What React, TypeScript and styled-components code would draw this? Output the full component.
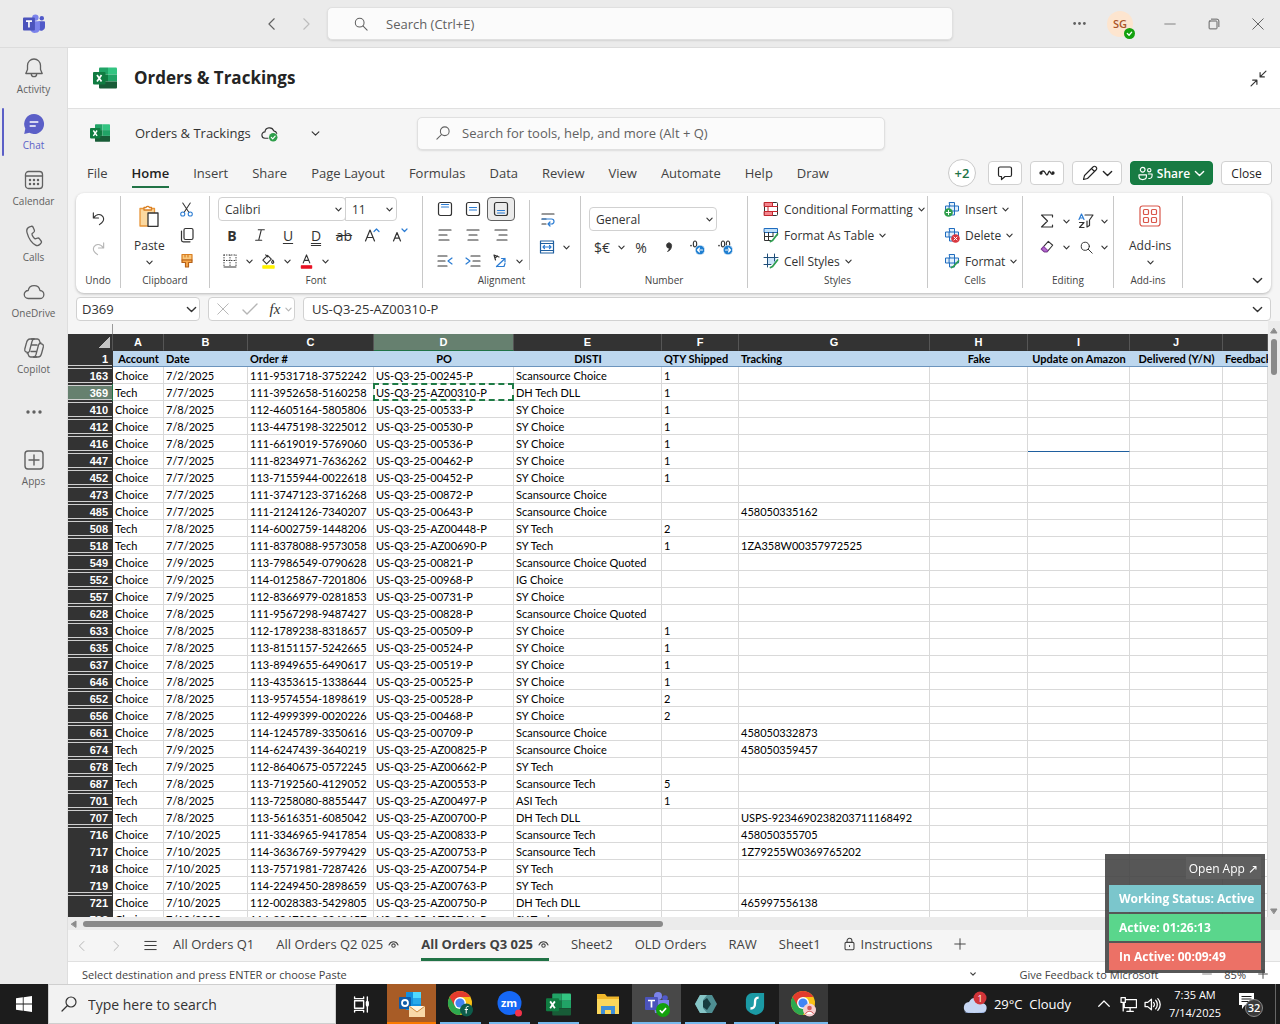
import React from 'react';
import styled, { createGlobalStyle, css } from 'styled-components';

const UI = `"Open Sans", "Noto Sans", sans-serif`;
const SHEET = `Lato, "Open Sans", sans-serif`;

const GlobalStyle = createGlobalStyle`
  *, *::before, *::after { box-sizing: border-box; }
  body { margin: 0; font-family: ${UI}; font-size: 13px; color: #333; background: #ebebeb; }
  button, input, select { font: inherit; color: inherit; margin: 0; padding: 0; border: 0; background: none; outline: 0; }
  svg { display: block; flex: none; }
`;

/* ---------- icons ---------- */

type IconProps = { w?: number; h?: number; box?: string; sw?: number; children: React.ReactNode };
const Icon = ({ w = 16, h = w, box = '0 0 16 16', sw = 1, children }: IconProps) => (
  <svg width={w} height={h} viewBox={box} fill="none" stroke="currentColor" strokeWidth={sw} strokeLinecap="round" strokeLinejoin="round" aria-hidden="true">
    {children}
  </svg>
);

const Chevron = ({ w = 7, sw = 1.3 }: { w?: number; sw?: number }) => (
  <Icon w={w} h={w} box="0 0 8 8" sw={sw}><path d="M1 2.5 4 5.5 7 2.5" /></Icon>
);
const Left = ({ w = 14 }: { w?: number }) => <Icon w={w} sw={1.3}><path d="M10.5 2 4.5 8l6 6" /></Icon>;
const Right = ({ w = 14 }: { w?: number }) => <Icon w={w} sw={1.3}><path d="M5.5 2l6 6-6 6" /></Icon>;
const SearchIcon = ({ w = 14, flip = false }: { w?: number; flip?: boolean }) => (
  <Icon w={w} sw={1.2}>
    {flip ? <><circle cx="10" cy="6" r="5" /><path d="M6.5 9.5 1 15" /></> : <><circle cx="6.5" cy="6.5" r="5" /><path d="M10.2 10.2 15 15" /></>}
  </Icon>
);

const ExcelLogo = ({ w = 24 }: { w?: number }) => (
  <svg width={w} height={w} viewBox="0 0 24 24" aria-hidden="true">
    <path d="M7 1.500h8v7H6v-6a1 1 0 0 1 1-1z" fill="#21a366" />
    <path d="M15 1.500h8a1 1 0 0 1 1 1v6h-9z" fill="#33c481" />
    <path d="M6 8.500h9v7H6z" fill="#107c41" />
    <path d="M15 8.500h9v7h-9z" fill="#21a366" />
    <path d="M6 15.500h18v6a1 1 0 0 1-1 1H7a1 1 0 0 1-1-1z" fill="#185c37" />
    <rect x="0" y="6" width="12.500" height="12.500" rx="1" fill="#107c41" />
    <path d="M4 9l4.500 6.500M8.500 9 4 15.500" stroke="#fff" strokeWidth="1.700" />
  </svg>
);

const TeamsLogo = ({ w = 22 }: { w?: number }) => (
  <svg width={w} height={w} viewBox="0 0 24 24" aria-hidden="true">
    <circle cx="13.500" cy="5" r="3.500" fill="#7b83eb" />
    <circle cx="20.500" cy="5.800" r="2.400" fill="#5059c9" />
    <path d="M17 9h6a1 1 0 0 1 1 1v5.500a4 4 0 0 1-7 2.500z" fill="#5059c9" />
    <path d="M8 9h10.500v7.500a5.500 5.500 0 0 1-10.500 2z" fill="#7b83eb" />
    <rect x="0" y="5" width="13" height="14" rx="1" fill="#4b53bc" />
    <path d="M3.300 8.800h6.500M6.500 8.800v7" stroke="#fff" strokeWidth="1.800" />
  </svg>
);

const BellIcon = () => <Icon w={22} box="0 0 22 22" sw={1.3}><path d="M11 2a6.500 6.500 0 0 0-6.500 6.500v4L2.800 16.500h16.400l-1.700-4v-4A6.500 6.500 0 0 0 11 2zM8.300 17a2.700 2.700 0 0 0 5.400 0" /></Icon>;
const ChatIcon = () => (
  <Icon w={22} box="0 0 22 22" sw={1.5}>
    <path d="M11 1a10 10 0 1 1-4.700 18.800L1.200 21l1.100-5.300A10 10 0 0 1 11 1z" fill="#5b5fc7" stroke="none" />
    <path d="M7.200 9h7.600M7.200 13h5" stroke="#fff" />
  </Icon>
);
const CalendarIcon = () => (
  <Icon w={22} box="0 0 22 22" sw={1.3}>
    <rect x="2.500" y="2.500" width="17" height="17" rx="3" /><path d="M2.500 7h17" />
    {[7, 11, 15].map((x) => [11, 15].map((y) => <circle key={`${x}${y}`} cx={x} cy={y} r="0.600" fill="currentColor" />))}
  </Icon>
);
const PhoneIcon = () => <Icon w={22} box="0 0 22 22" sw={1.3}><path d="M6.600 1.800 8 1.400c.9-.3 1.800.2 2.200 1l1.100 2.500c.3.800.1 1.600-.5 2.200L9 8.800c-.1 1.500 1.700 4.300 3.100 5l2.300-.7c.8-.3 1.600 0 2.100.7l1.600 2.200c.5.700.4 1.700-.2 2.300l-.9.900c-1.200 1.200-3 1.700-4.400.9C8.500 17.700 5.600 13.300 4.100 7.800 3.400 5.300 3.900 2.700 6.600 1.800z" /></Icon>;
const CloudIcon = () => <Icon w={22} box="0 0 22 22" sw={1.3}><path d="M5.300 17.500h11.400a4 4 0 0 0 .3-8A6 6 0 0 0 5.200 9.500a4 4 0 0 0 .1 8z" /></Icon>;
const CopilotIcon = () => (
  <Icon w={22} box="0 0 22 22" sw={1.300}>
    <path d="M8.500 2h6c1.500 0 1.900 1 2.300 2.500L17.300 6c.5 1 1.200 1 2 1.200 1 .4 1.300 1.500 1 2.800l-1.600 6c-.6 2.500-1.600 4-3.700 4h-4.500" />
    <path d="M13.500 20h-6C6 20 5.600 19 5.200 17.500L4.800 16c-.4-1-1.200-1-2-1.200-1-.4-1.300-1.500-1-2.800l1.600-6C4 3.500 5 2 7 2h4" />
    <path d="M11 2c-1 0-1.500 1-2 2.500L6.500 14c-.5 1.500-1 2-2.500 2M11 20c1 0 1.500-1 2-2.500L15.500 8c.5-1.500 1-2 2.500-2M8.300 8H14M8 14.500h5.500" />
  </Icon>
);
const AppsIcon = () => <Icon w={22} box="0 0 22 22" sw={1.400}><rect x="2" y="2" width="18" height="18" rx="3" /><path d="M11 6v10M6 11h10" /></Icon>;
const DotsIcon = ({ w = 16 }: { w?: number }) => (
  <svg width={w} height={w} viewBox="0 0 16 16" fill="currentColor" aria-hidden="true"><circle cx="2" cy="8" r="1.700" /><circle cx="8" cy="8" r="1.700" /><circle cx="14" cy="8" r="1.700" /></svg>
);
const EyeIcon = () => <Icon w={11} h={9} box="0 0 12 10" sw={1.200}><path d="M1 5.500C2 3 4 2 6 2s4 1 5 3.500" /><circle cx="6" cy="6.200" r="1.900" /></Icon>;

const AlignLines = ({ at }: { at: 'l' | 'c' | 'r' }) => (
  <Icon sw={1.200}>
    <path d={at === 'l' ? 'M2 3h12M2 8h8M2 13h10' : at === 'c' ? 'M2 3h12M4 8h8M3 13h10' : 'M2 3h12M6 8h8M4 13h10'} />
  </Icon>
);
const VAlign = ({ y }: { y: number }) => (
  <Icon w={16} sw={1.200}><rect x="1.500" y="1.500" width="13" height="13" rx="2" /><path d={`M4.500 ${y}h7M4.500 ${y + 2.500}h7`} stroke="#2b7cd3" /></Icon>
);
const Indent = ({ out = false }: { out?: boolean }) => (
  <Icon sw={1.200}>
    <path d={out ? 'M1 3h9M1 8h7M1 13h9' : 'M6 3h9M8 8h7M6 13h9'} />
    <path d={out ? 'M15 5l-4 3 4 3' : 'M1 5l4 3-4 3'} stroke="#2b7cd3" />
  </Icon>
);
const TableGrid = ({ kind }: { kind: 'cond' | 'table' | 'style' }) => (
  <Icon>
    {kind === 'cond' && <><rect x="1.500" y="1.500" width="13" height="13" rx="1" stroke="#333" /><path d="M1.500 1.500h8v4h-8zM1.500 10.500h8v4h-8z" fill="#f4868e" stroke="#c4262e" /><path d="M1.500 5.500h13M1.500 10.500h13M5 5.500v5" stroke="#c4262e" /></>}
    {kind === 'table' && <><rect x="1.500" y="1.500" width="13" height="4" fill="#bfe0fa" stroke="#1f6cbf" /><path d="M1.500 5.500v8h6M1.500 9.500H10M5.500 5.500v8M10 5.500V9M14.500 5.500V8" /><path d="M14.500 7 9.500 13.500 7.500 14.500" stroke="#2f9e50" strokeWidth="1.800" /></>}
    {kind === 'style' && <><path d="M4 5h9v6H4z" fill="#cfe6fa" stroke="none" /><path d="M4.500 1v13M11.500 1v7M1 4.500h14M1 11.500h7" stroke="#1f4e79" /><path d="M14.500 7 9.500 13.500 7.500 14.500" stroke="#2f9e50" strokeWidth="1.800" /></>}
  </Icon>
);
const CellCross = ({ kind }: { kind: 'insert' | 'delete' | 'format' }) => (
  <Icon>
    <path d="M5.500 1.500h5v3.500h4v5h-4v4h-5v-4h-4V5h4z" fill="#e3f0fb" stroke="#1f6cbf" />
    <path d="M5.500 5h5v5h-5z" stroke="#1f6cbf" />
    {kind === 'insert' && <><circle cx="4.500" cy="11.500" r="4.300" fill="#2e9e4a" stroke="none" /><path d="M4.500 9.300v4.400M2.300 11.500h4.400" stroke="#fff" /></>}
    {kind === 'delete' && <><circle cx="11.500" cy="11.500" r="4.300" fill="#d9363e" stroke="none" /><path d="M10 10l3 3M13 10l-3 3" stroke="#fff" /></>}
    {kind === 'format' && <path d="M14.500 8 9.500 13.500 7.500 14.500" stroke="#2f9e50" strokeWidth="1.800" />}
  </Icon>
);
const Decimal = ({ more = false }: { more?: boolean }) => (
  <Icon w={18} box="0 0 18 18" sw={1.100}>
    <path d="M3 7.500v.2" strokeWidth="1.600" /><ellipse cx="7" cy="6" rx="1.700" ry="3" />{more && <ellipse cx="12" cy="6" rx="1.700" ry="3" />}
    <circle cx="12" cy="12" r="4.800" fill="#1f7fd1" stroke="#fff" strokeWidth="0.600" />
    <path d={more ? 'M9.500 12h5M12.500 10l2 2-2 2' : 'M14.500 12h-5M11.500 10l-2 2 2 2'} stroke="#fff" />
  </Icon>
);

/* ---------- shell ---------- */

const Desktop = styled.div`display: flex; flex-direction: column; height: 100vh; overflow: hidden;`;
const IconButton = styled.button<{ $w?: number; $muted?: boolean }>`
  display: inline-flex; align-items: center; justify-content: center;
  width: ${(p) => p.$w ?? 28}px; height: 24px; flex: none;
  color: ${(p) => (p.$muted ? '#b5b5b5' : '#333')};
`;
const BarButton = styled(IconButton)`color: ${(p) => (p.$muted ? '#bdbdbd' : '#616161')};`;

const TitleBar = styled.header`
  display: grid; grid-template-columns: 1fr minmax(0, 626px) 1fr; align-items: center;
  height: 48px; flex: none; background: #ebebeb; border-bottom: 1px solid #dcdcdc;
`;
const BarSide = styled.div<{ $end?: boolean }>`
  display: flex; align-items: center; padding: ${(p) => (p.$end ? '0' : '0 5px 0 23px')};
  justify-content: ${(p) => (p.$end ? 'flex-end' : 'flex-start')};
`;
const Spacer = styled.div`flex: 1;`;
const SearchBox = styled.label<{ $gap: number; $pad: number }>`
  display: flex; align-items: center; gap: ${(p) => p.$gap}px; padding: 0 ${(p) => p.$pad}px;
  height: 33px; flex: 1; background: #fbfbfb; border: 1px solid #e0e0e0; border-radius: 5px;
  box-shadow: 0 1px 2px rgba(0,0,0,.1); color: #616161;
  input { flex: 1; min-width: 0; }
  input::placeholder { color: #616161; opacity: 1; }
`;
const Avatar = styled.button`
  position: relative; width: 26px; height: 26px; border-radius: 50%; margin: 0 15px 0 14px;
  background: #fde5cf; color: #a8542a; font-size: 11px; font-weight: 600;
`;
const Presence = styled.span`
  position: absolute; right: -2px; bottom: -2px; display: flex; align-items: center; justify-content: center;
  width: 11px; height: 11px; border-radius: 50%; background: #13a10e; color: #fff;
`;

const Body = styled.div`display: flex; flex: 1; min-height: 0;`;
const Rail = styled.nav`display: flex; flex-direction: column; width: 68px; flex: none; background: #ebebeb; border-right: 1px solid #dedede;`;
const RailItem = styled.button<{ $active?: boolean }>`
  position: relative; display: flex; flex-direction: column; align-items: center; justify-content: center; gap: 3px;
  height: 56px; font-size: 10px; line-height: 14px; color: ${(p) => (p.$active ? '#5b5fc7' : '#616161')};
  ${(p) => p.$active && css`&::before { content: ''; position: absolute; left: 2px; top: 4px; bottom: 4px; width: 2px; border-radius: 1px; background: #5b5fc7; }`}
`;
const Main = styled.main`display: flex; flex-direction: column; flex: 1; min-width: 0; background: #f5f5f5;`;
const FileHeader = styled.div`
  display: flex; align-items: center; gap: 17px; height: 61px; flex: none; padding: 0 8px 0 25px;
  background: #fff; border-bottom: 1px solid #e0e0e0;
  h1 { margin: 0; flex: 1; font-size: 17px; line-height: 24px; font-weight: 700; color: #242424; }
`;
const DocBar = styled.div`display: grid; grid-template-columns: 349px minmax(0, 468px) 1fr; align-items: center; height: 48px; flex: none;`;
const DocName = styled.div`display: flex; align-items: center; gap: 10px; padding-left: 22px; span { margin-left: 15px; }`;
const DocMenu = styled(IconButton)`margin-left: 14px;`;

const MenuBar = styled.div`display: flex; align-items: center; height: 32px; flex: none; padding: 0 8px 0 19px;`;
const MenuTabs = styled.nav`display: flex; flex: 1; gap: 24px;`;
const MenuTab = styled.button<{ $active?: boolean }>`
  height: 30px; border-bottom: 2px solid ${(p) => (p.$active ? '#217346' : 'transparent')};
  border-top: 2px solid transparent; font-weight: ${(p) => (p.$active ? 600 : 400)}; color: ${(p) => (p.$active ? '#222' : '#424242')};
`;
const Actions = styled.div`display: flex; align-items: center; gap: 8px;`;
const Peers = styled.button`width: 28px; height: 28px; margin-right: 4px; border: 1px solid #c9c9c9; border-radius: 50%; background: #fff; color: #217346; font-weight: 600;`;
const ActionButton = styled.button<{ $w: number; $primary?: boolean }>`
  display: inline-flex; align-items: center; justify-content: center; gap: 4px; width: ${(p) => p.$w}px; height: 24px;
  border: 1px solid ${(p) => (p.$primary ? '#107c41' : '#d1d1d1')}; border-radius: 4px; font-size: 12px;
  background: ${(p) => (p.$primary ? '#187b43' : '#fff')}; color: ${(p) => (p.$primary ? '#fff' : '#242424')}; font-weight: ${(p) => (p.$primary ? 600 : 400)};
`;

/* ---------- ribbon ---------- */

const Ribbon = styled.section`
  display: flex; height: 100px; flex: none; margin: 4px 9px 0 8px; padding: 3px 0 5px; background: #fff;
  border-radius: 8px; box-shadow: 0 1px 3px rgba(0,0,0,.25); font-size: 12px;
`;
const Group = styled.div<{ $w: number }>`
  display: flex; flex-direction: column; width: ${(p) => p.$w}px; flex: none; border-right: 1px solid #c8c8c8;
`;
const GroupBody = styled.div<{ $pad?: number; $gap?: number }>`
  display: flex; height: 78px; gap: ${(p) => p.$gap ?? 0}px; padding: 0 0 0 ${(p) => p.$pad ?? 0}px;
`;
const GroupLabel = styled.div`font-size: 10px; line-height: 12px; text-align: center; color: #424242;`;
const Stack = styled.div<{ $w?: number; $gap?: number; $center?: boolean; $foot?: number }>`
  display: flex; flex-direction: column; justify-content: center; gap: ${(p) => p.$gap ?? 2}px; padding-bottom: ${(p) => p.$foot ?? 0}px;
  align-items: ${(p) => (p.$center ? 'center' : 'flex-start')}; ${(p) => p.$w && `width: ${p.$w}px;`}
`;
const Row = styled.div<{ $gap?: number }>`display: flex; align-items: center; height: 24px; gap: ${(p) => p.$gap ?? 0}px;`;
const Toggle = styled(IconButton)<{ $on?: boolean }>`
  ${(p) => p.$on && 'border: 1px solid #616161; border-radius: 4px; background: #ebebeb;'}
`;
const Glyph = styled(IconButton)<{ $bold?: boolean; $italic?: boolean; $line?: string }>`
  font-size: 14px; font-weight: ${(p) => (p.$bold ? 700 : 400)};
  font-family: ${(p) => (p.$italic ? '"Liberation Serif", serif' : 'inherit')}; font-style: ${(p) => (p.$italic ? 'italic' : 'normal')};
  text-decoration: ${(p) => p.$line ?? 'none'}; text-underline-offset: 2px;
`;
const BigButton = styled.button`
  display: flex; flex-direction: column; align-items: center; justify-content: center; gap: 1px; line-height: 24px;
  > svg:first-child { margin-bottom: 6px; }
`;
const TextButton = styled.button`display: flex; align-items: center; gap: 5px; height: 24px; white-space: nowrap;`;
const SelectWrap = styled.span<{ $w: number; $joined?: boolean }>`
  display: grid; align-items: center; width: ${(p) => p.$w}px; height: 24px; background: #fff;
  border: 1px solid #d1d1d1; border-radius: ${(p) => (p.$joined ? '0 4px 4px 0' : '4px')};
  margin-left: ${(p) => (p.$joined ? '-1px' : '0')};
  > * { grid-area: 1 / 1; }
  > svg { justify-self: end; margin-right: 3px; pointer-events: none; }
  select { appearance: none; width: 100%; padding-left: 6px; }
`;
const Divider = styled.div`width: 1px; height: 70px; margin: 4px 4px 0; background: #c8c8c8;`;
const RibbonToggle = styled(IconButton)`margin: auto 0 0 auto; height: 16px;`;

/* ---------- formula bar ---------- */

const FormulaBar = styled.div`display: flex; gap: 8px; height: 24px; flex: none; margin: 4px 9px 0 8px;`;
const Field = styled.div<{ $w?: number }>`
  display: flex; align-items: center; ${(p) => (p.$w ? `width: ${p.$w}px;` : 'flex: 1;')} min-width: 0; padding: 0 2px 0 5px;
  background: #fff; border: 1px solid #d1d1d1; border-radius: 4px; color: #333;
  input { flex: 1; min-width: 0; }
`;
const FormulaField = styled(Field)`padding: 0 0 0 8px;`;
const Fx = styled(IconButton)`font: italic 15px "Liberation Serif", serif;`;

/* ---------- grid ---------- */

const SheetArea = styled.div`display: flex; flex: 1; min-height: 0;`;
const SheetPane = styled.div`flex: 1; min-width: 0; overflow: hidden;`;
const FreezeMark = styled.div`width: 45px; height: 10px; margin-top: 3px; border-right: 1px solid #9a9a9a;`;
const Grid = styled.table`
  width: 100%; table-layout: fixed; border-collapse: separate; border-spacing: 0; background: #fff;
  font-family: ${SHEET}; font-size: 11px; color: #000;
`;
const Letter = styled.th<{ $on?: boolean }>`
  height: 17px; padding: 0; font: 700 11px/16px "Liberation Sans", sans-serif; text-align: center; color: #fff;
  background: ${(p) => (p.$on ? '#66806f' : '#333')}; border-right: 1px solid #555; border-bottom: 1px solid ${(p) => (p.$on ? '#217346' : '#333')};
`;
const Corner = styled(Letter)`
  background: linear-gradient(135deg, transparent 50%, #c4c4c4 50%) right 2px center / 11px 11px no-repeat, #333;
`;
const RowHead = styled.th<{ $on?: boolean; $top?: boolean; $bottom?: boolean; $first?: boolean }>`
  height: ${(p) => (p.$first ? 16 : 17)}px; padding: ${(p) => (p.$first ? '1px 4px 0 0' : '2px 4px 0 0')};
  font: 700 11px/15px "Liberation Sans", sans-serif; text-align: right; color: #fff;
  background: ${(p) => (p.$on ? '#66806f' : '#333')}; border-right: 1px solid ${(p) => (p.$on ? '#217346' : '#333')};
  box-shadow: ${(p) => [p.$bottom && 'inset 0 -1px #333, inset 0 -2px #d0d0d0', p.$top && 'inset 0 1px #333, inset 0 2px #d0d0d0'].filter(Boolean).join(', ') || 'none'};
`;
const FieldHead = styled.th<{ $center?: boolean }>`
  height: 16px; padding: 1px 2px 0; line-height: 14px; white-space: nowrap; font-weight: 700; background: #bdd7ee; border-bottom: 1px solid #6b94bd;
  text-align: ${(p) => (p.$center ? 'center' : 'left')};
`;
const Cell = styled.td<{ $copied?: boolean; $marked?: boolean }>`
  position: relative; height: 17px; padding: 2px 0 0 2px; line-height: 14px; white-space: nowrap;
  border-right: 1px solid #d9d9d9; border-bottom: 1px solid ${(p) => (p.$marked ? '#1f5f9f' : '#d9d9d9')};
  ${(p) => p.$copied && css`&::after { content: ''; position: absolute; inset: -1px; border: 2px dashed #1e7b45; }`}
`;
const VScroll = styled.div`
  display: flex; flex-direction: column; align-items: center; gap: 4px; width: 12px; padding: 6px 0 2px; background: #ebebeb; color: #8a8a8a;
`;
const VThumb = styled.div`width: 6px; height: 36px; border-radius: 3px; background: #8a8a8a;`;
const HScroll = styled.div`display: flex; align-items: center; gap: 5px; height: 13px; flex: none; padding: 0 2px; background: #ebebeb; color: #8a8a8a;`;
const HThumb = styled.div`width: 48%; height: 6px; border-radius: 3px; background: #8a8a8a;`;

const SheetTabs = styled.div`display: flex; align-items: center; height: 32px; flex: none; border-bottom: 1px solid #e0e0e0; color: #424242;`;
const SheetNav = styled.div`display: flex; gap: 4px; margin-right: 9px;`;
const TabList = styled.div`display: flex; gap: 22px;`;
const SheetTab = styled.button<{ $active?: boolean }>`
  display: flex; align-items: center; gap: 5px; height: 31px; white-space: nowrap;
  border-bottom: 3px solid ${(p) => (p.$active ? '#217346' : 'transparent')}; font-weight: ${(p) => (p.$active ? 700 : 400)};
`;
const StatusBar = styled.footer`
  display: flex; align-items: center; height: 22px; flex: none; padding: 2px 12px 0 14px; background: #fff; font-size: 11px; color: #424242;
`;
const StatusRight = styled.div`display: flex; align-items: center; margin-left: auto; gap: 12px;`;
const Feedback = styled.a`margin: 0 32px; color: inherit; text-decoration: none;`;

/* ---------- tracker widget ---------- */

const Tracker = styled.aside`
  position: fixed; right: 15px; bottom: 51px; z-index: 2; display: flex; flex-direction: column; gap: 2px;
  width: 160px; padding: 3px 4px; background: rgba(64,64,64,.88); color: #fff;
`;
const OpenApp = styled.button`align-self: flex-end; height: 22px; margin-bottom: 4px; padding: 0 3px; background: #5f5f5f; color: #fff; font-size: 12px;`;
const TrackerRow = styled.div<{ $bg: string }>`height: 27px; padding: 0 10px; line-height: 27px; font-size: 12px; font-weight: 700; white-space: nowrap; background: ${(p) => p.$bg};`;

/* ---------- taskbar ---------- */

const Taskbar = styled.div`display: flex; height: 40px; flex: none; background: #1c1c1c; color: #fff;`;
const TaskButton = styled.button<{ $w?: number; $bg?: string }>`
  display: flex; align-items: center; justify-content: center; width: ${(p) => p.$w ?? 49}px; background: ${(p) => p.$bg ?? 'none'}; color: #fff;
`;
const AppButton = styled(TaskButton)<{ $line?: string; $full?: boolean }>`
  position: relative;
  ${(p) => p.$line && css`&::after { content: ''; position: absolute; bottom: 0; left: ${p.$full ? 0 : 4}px; right: ${p.$full ? 0 : 4}px; height: 2px; background: ${p.$line}; }`}
`;
const TaskSearch = styled.label`
  display: flex; align-items: center; gap: 11px; width: 288px; padding: 0 12px; background: #f2f2f2; border: 1px solid #cfcfcf; color: #333;
  input { flex: 1; min-width: 0; font-size: 14px; }
  input::placeholder { color: #333; opacity: 1; }
`;
const Tray = styled.div`display: flex; align-items: center; margin-left: auto;`;
const Weather = styled.button`display: flex; align-items: center; gap: 5px; height: 40px; margin-right: 22px; color: #fff; white-space: pre;`;
const TrayButton = styled(TaskButton)`height: 40px;`;
const Clock = styled.button`width: 60px; margin: 0 0 0 2px; font-size: 11px; line-height: 18px; color: #fff; white-space: pre-line;`;
const Notices = styled.button`display: flex; align-items: center; justify-content: center; width: 51px; height: 40px; border-right: 1px solid #666; margin-right: 4px; color: #fff;`;

/* ---------- data ---------- */

const widths = [45, 51, 84, 126, 140, 148, 77, 191, 98, 102, 93];
const fields: [string, boolean][] = [
  ['Account', true], ['Date', false], ['Order #', false], ['PO', true], ['DISTI', true], ['QTY Shipped', false],
  ['Tracking', false], ['Fake', true], ['Update on Amazon', true], ['Delivered (Y/N)', true], ['Feedback', false],
];
const orders = `163|Choice|7/2/2025|111-9531718-3752242|00245|Scansource Choice|1
369|Tech|7/7/2025|111-3952658-5160258|AZ00310|DH Tech DLL|1
410|Choice|7/8/2025|112-4605164-5805806|00533|SY Choice|1
412|Choice|7/8/2025|113-4475198-3225012|00530|SY Choice|1
416|Choice|7/8/2025|111-6619019-5769060|00536|SY Choice|1
447|Choice|7/7/2025|111-8234971-7636262|00462|SY Choice|1
452|Choice|7/7/2025|113-7155944-0022618|00452|SY Choice|1
473|Choice|7/7/2025|111-3747123-3716268|00872|Scansource Choice|
485|Choice|7/7/2025|111-2124126-7340207|00643|Scansource Choice||458050335162
508|Tech|7/8/2025|114-6002759-1448206|AZ00448|SY Tech|2
518|Tech|7/7/2025|111-8378088-9573058|AZ00690|SY Tech|1|1ZA358W00357972525
549|Choice|7/9/2025|113-7986549-0790628|00821|Scansource Choice Quoted|
552|Choice|7/9/2025|114-0125867-7201806|00968|IG Choice|
557|Choice|7/9/2025|112-8366979-0281853|00731|SY Choice|
628|Choice|7/8/2025|111-9567298-9487427|00828|Scansource Choice Quoted|
633|Choice|7/8/2025|112-1789238-8318657|00509|SY Choice|1
635|Choice|7/8/2025|113-8151157-5242665|00524|SY Choice|1
637|Choice|7/8/2025|113-8949655-6490617|00519|SY Choice|1
646|Choice|7/8/2025|113-4353615-1338644|00525|SY Choice|1
652|Choice|7/8/2025|113-9574554-1898619|00528|SY Choice|2
656|Choice|7/8/2025|112-4999399-0020226|00468|SY Choice|2
661|Choice|7/8/2025|114-1245789-3350616|00709|Scansource Choice||458050332873
674|Tech|7/9/2025|114-6247439-3640219|AZ00825|Scansource Choice||458050359457
678|Tech|7/9/2025|112-8640675-0572245|AZ00662|SY Tech|
687|Tech|7/8/2025|113-7192560-4129052|AZ00553|Scansource Tech|5
701|Tech|7/8/2025|113-7258080-8855447|AZ00497|ASI Tech|1
707|Tech|7/8/2025|113-5616351-6085042|AZ00700|DH Tech DLL||USPS-9234690238203711168492
716|Choice|7/10/2025|111-3346965-9417854|AZ00833|Scansource Tech||458050355705
717|Choice|7/10/2025|114-3636769-5979429|AZ00753|Scansource Tech||1Z79255W0369765202
718|Choice|7/10/2025|113-7571981-7287426|AZ00754|SY Tech|
719|Choice|7/10/2025|114-2249450-2898659|AZ00763|SY Tech|
721|Choice|7/10/2025|112-0028383-5429805|AZ00750|DH Tech DLL||465997556138
722|Choice|7/10/2025|114-8267928-8248657|AZ00761|SY Tech|`.split('\n').map((l) => l.split('|'));

const Pick = ({ label, w = 18 }: { label: string; w?: number }) => <IconButton $w={w} aria-label={label}><Chevron /></IconButton>;

const RibbonBar = () => (
  <Ribbon aria-label="Ribbon">
    <Group $w={45}>
      <GroupBody><Stack $w={44} $gap={6} $foot={4} $center>
        <IconButton aria-label="Undo"><Icon w={15} sw={1.200}><path d="M2.500 2v5.500H8M2.700 7.300C5 4 8.500 2.800 11.200 4.500c3.300 2.200 2.800 6 .3 8L9 14.500" /></Icon></IconButton>
        <IconButton $muted aria-label="Redo"><Icon w={15} sw={1.200}><path d="M13.500 2v5.500H8M13.300 7.300C11 4 7.500 2.800 4.800 4.500c-3.300 2.200-2.800 6-.3 8L7 14.500" /></Icon></IconButton>
      </Stack></GroupBody>
      <GroupLabel>Undo</GroupLabel>
    </Group>

    <Group $w={89}>
      <GroupBody $pad={13} $gap={8}>
        <BigButton>
          <Icon w={20} h={22} box="0 0 20 22" sw={1.300}>
            <path d="M1 3.500h14.500V21H1z" fill="#fbd9a0" stroke="#e8963a" /><path d="M5 5V2.500h2a2 2 0 0 1 3.500 0h2V5z" fill="#fff" stroke="#d97f22" />
            <path d="M9 8h10v13.300H9z" fill="#fff" stroke="#333" />
          </Icon>
          Paste
          <Chevron />
        </BigButton>
        <Stack>
          <IconButton aria-label="Cut"><Icon w={15} sw={1.100}><path d="M4 1l6.500 10M12 1 5.500 11" /><circle cx="4" cy="12.800" r="2.200" stroke="#2b7cd3" /><circle cx="12" cy="12.800" r="2.200" stroke="#2b7cd3" /></Icon></IconButton>
          <IconButton aria-label="Copy"><Icon sw={1.200}><rect x="5" y="1.500" width="9" height="11" rx="1.500" /><path d="M2.500 4v9a1.800 1.800 0 0 0 1.800 1.800H11" /></Icon></IconButton>
          <IconButton aria-label="Format painter"><Icon sw={1.200}><path d="M3 1.500h10V7H3z" fill="#f9c77c" stroke="#d97f22" /><path d="M6 1.500V4M9 1.500V4" stroke="#d97f22" /><path d="M3 7h10v2.500H9.500v4.500h-3V9.500H3z" fill="#f9a94b" stroke="#b4601a" /></Icon></IconButton>
        </Stack>
      </GroupBody>
      <GroupLabel>Clipboard</GroupLabel>
    </Group>

    <Group $w={213}>
      <GroupBody $pad={8}><Stack>
        <Row>
          <SelectWrap $w={128}><select aria-label="Font name"><option>Calibri</option></select><Chevron /></SelectWrap>
          <SelectWrap $w={52} $joined><select aria-label="Font size"><option>11</option></select><Chevron /></SelectWrap>
        </Row>
        <Row>
          <Glyph $bold aria-label="Bold">B</Glyph>
          <IconButton aria-label="Italic"><Icon w={14} sw={1.200}><path d="M6 2h7M3 14h7M9.500 2l-3 12" /></Icon></IconButton>
          <Glyph $line="underline" aria-label="Underline">U</Glyph>
          <Glyph $line="underline double" aria-label="Double underline">D</Glyph>
          <Glyph $line="line-through" aria-label="Strikethrough">ab</Glyph>
          <IconButton aria-label="Grow font"><Icon w={16} sw={1.200}><path d="M1.500 14 6 3l4.500 11M3 10.500h6" /><path d="M10 4.500 12.500 2 15 4.500" stroke="#2b7cd3" /></Icon></IconButton>
          <IconButton aria-label="Shrink font"><Icon w={16} sw={1.200}><path d="M1.500 14 5 5.500 8.500 14M2.700 11.200h4.600" /><path d="M10 2l2.500 2.500L15 2" stroke="#2b7cd3" /></Icon></IconButton>
        </Row>
        <Row $gap={1}>
          <IconButton $w={24} aria-label="Borders"><Icon w={14} box="0 0 14 14"><path d="M1 1h12M1 1v11M13 1v11M7 1v11M1 6.500h12" strokeDasharray="0.500 2" /><path d="M1 13h12" /></Icon></IconButton><Pick label="Border options" w={12} />
          <IconButton $w={24} aria-label="Fill colour"><Icon w={15} sw={1.200}><path d="M7 1.500 2 6.500 6 10.500 11 5.500zM5 1l2 2M12.500 6.500c1.500 2 1.500 3 0 3.500-1.500-.5-1.500-1.500 0-3.500z" /><path d="M2 12.500h12v2.500H2z" fill="#fff200" stroke="#fff200" /></Icon></IconButton><Pick label="Fill options" w={12} />
          <IconButton $w={24} aria-label="Font colour"><Icon w={15} sw={1.200}><path d="M4.500 9.500 8 1l3.500 8.500M5.700 6.800h4.600" /><path d="M2.500 12.500h11v2.500h-11z" fill="#e81123" stroke="#e81123" /></Icon></IconButton><Pick label="Font colour options" w={12} />
        </Row>
      </Stack></GroupBody>
      <GroupLabel>Font</GroupLabel>
    </Group>

    <Group $w={158}>
      <GroupBody $pad={8}>
        <Stack>
          <Row><Toggle aria-label="Top align"><VAlign y={3.5} /></Toggle><Toggle aria-label="Middle align"><VAlign y={6.5} /></Toggle><Toggle $on aria-label="Bottom align"><VAlign y={9.5} /></Toggle></Row>
          <Row><IconButton aria-label="Align left"><AlignLines at="l" /></IconButton><IconButton aria-label="Align centre"><AlignLines at="c" /></IconButton><IconButton aria-label="Align right"><AlignLines at="r" /></IconButton></Row>
          <Row><IconButton aria-label="Decrease indent"><Indent out /></IconButton><IconButton aria-label="Increase indent"><Indent /></IconButton>
            <IconButton $w={26} aria-label="Orientation"><Icon sw={1.200}><path d="M2 2l5 2M2 2l1.500 5M3 5l2.500-2" /><path d="M4.500 13.500 13 5.500M13 5.500H9.500M13 5.500V9M4.500 13.500H12l1-3" stroke="#2b7cd3" /></Icon></IconButton><Pick label="Orientation options" w={12} /></Row>
        </Stack>
        <Divider />
        <Stack $gap={4} $foot={4}>
          <Row><IconButton aria-label="Wrap text"><Icon sw={1.200}><path d="M2 3h12M2 8h4M2 13h4" /><path d="M2 8h9.500a2.500 2.500 0 0 1 0 5H8M10 11l-2 2 2 2" stroke="#2b7cd3" /></Icon></IconButton></Row>
          <Row><IconButton $w={26} aria-label="Merge cells"><Icon sw={1.200}><rect x="1.500" y="2" width="13" height="12" stroke="#1f5f9f" /><path d="M1.500 4.500h13M1.500 11.500h13" stroke="#1f5f9f" /><path d="M4 8h8M5.500 6.500 4 8l1.500 1.500M10.500 6.500 12 8l-1.500 1.500" stroke="#2b7cd3" /></Icon></IconButton><Pick label="Merge options" w={12} /></Row>
        </Stack>
      </GroupBody>
      <GroupLabel>Alignment</GroupLabel>
    </Group>

    <Group $w={167}>
      <GroupBody $pad={8}><Stack $gap={4} $foot={4}>
        <SelectWrap $w={128}><select aria-label="Number format"><option>General</option></select><Chevron /></SelectWrap>
        <Row>
          <Glyph $w={26} aria-label="Currency">$€</Glyph><Pick label="Currency options" w={12} /><Glyph aria-label="Percent">%</Glyph>
          <IconButton $w={28} aria-label="Comma style"><Icon w={12}><path d="M8 2.500a3.500 3.500 0 0 1 3.500 3.500c0 4-2 7-5.500 8 1.500-1.500 2.300-3 2.300-4.500A3.500 3.500 0 1 1 8 2.500z" fill="currentColor" /></Icon></IconButton>
          <IconButton aria-label="Decrease decimal"><Decimal /></IconButton><IconButton aria-label="Increase decimal"><Decimal more /></IconButton>
        </Row>
      </Stack></GroupBody>
      <GroupLabel>Number</GroupLabel>
    </Group>

    <Group $w={180}>
      <GroupBody $pad={15}><Stack>
        <TextButton><TableGrid kind="cond" />Conditional Formatting<Chevron /></TextButton>
        <TextButton><TableGrid kind="table" />Format As Table<Chevron /></TextButton>
        <TextButton><TableGrid kind="style" />Cell Styles<Chevron /></TextButton>
      </Stack></GroupBody>
      <GroupLabel>Styles</GroupLabel>
    </Group>

    <Group $w={95}>
      <GroupBody $pad={16}><Stack>
        <TextButton><CellCross kind="insert" />Insert<Chevron /></TextButton>
        <TextButton><CellCross kind="delete" />Delete<Chevron /></TextButton>
        <TextButton><CellCross kind="format" />Format<Chevron /></TextButton>
      </Stack></GroupBody>
      <GroupLabel>Cells</GroupLabel>
    </Group>

    <Group $w={91}>
      <GroupBody $pad={13}><Stack $foot={2}>
        <Row><IconButton $w={22} aria-label="AutoSum"><Icon sw={1.200}><path d="M13.500 4V2H2.500l6 6-6 6h11v-2" /></Icon></IconButton><Pick label="AutoSum options" w={16} />
          <IconButton $w={24} aria-label="Sort and filter"><Icon sw={1.200}><path d="M1 6.500 3.500 1 6 6.500M2 5h3" stroke="#2b7cd3" /><path d="M1.500 9.500H6l-4.500 5H6" /><path d="M7 2h8l-3.500 5v5.500L9 14V8" /></Icon></IconButton><Pick label="Sort options" w={12} /></Row>
        <Row><IconButton $w={22} aria-label="Clear"><Icon w={14} sw={1.200}><path d="M9.500 1.500 14.500 6 8 13.500H5L1.500 10.500z" /><path d="M4.300 7.500 9 12.200 7.800 13.500H5L1.500 10.500z" fill="#b36bcb" stroke="#8b3fa8" /></Icon></IconButton><Pick label="Clear options" w={16} />
          <IconButton $w={24} aria-label="Find"><SearchIcon w={13} /></IconButton><Pick label="Find options" w={12} /></Row>
      </Stack></GroupBody>
      <GroupLabel>Editing</GroupLabel>
    </Group>

    <Group $w={69}>
      <GroupBody $pad={15}>
        <BigButton>
          <Icon w={22} box="0 0 22 22" sw={1.200}><g stroke="#d9564a"><rect x="1" y="1" width="20" height="20" rx="2.500" /><rect x="4.500" y="4.500" width="5" height="5" rx="1" /><rect x="12.500" y="4.500" width="5" height="5" rx="1" /><rect x="4.500" y="12.500" width="5" height="5" rx="1" /><rect x="12.500" y="12.500" width="5" height="5" rx="1" /></g></Icon>
          Add-ins
          <Chevron />
        </BigButton>
      </GroupBody>
      <GroupLabel>Add-ins</GroupLabel>
    </Group>
    <RibbonToggle aria-label="Collapse ribbon"><Chevron w={11} sw={1} /></RibbonToggle>
  </Ribbon>
);

const SheetGrid = () => (
  <Grid>
    <colgroup>{widths.map((w, i) => <col key={i} width={w} />)}<col /></colgroup>
    <thead>
      <tr><Corner aria-label="Select all" />{'ABCDEFGHIJ'.split('').map((l) => <Letter key={l} $on={l === 'D'} scope="col">{l}</Letter>)}<Letter scope="col" aria-label="K" /></tr>
      <tr><RowHead $first $bottom scope="row">1</RowHead>{fields.map(([f, c]) => <FieldHead key={f} $center={c} scope="col">{f}</FieldHead>)}</tr>
    </thead>
    <tbody>
      {orders.map(([n, account, date, order, po, disti, qty, tracking], i) => {
        const prev = i ? +orders[i - 1][0] : 1;
        const next = i + 1 < orders.length ? +orders[i + 1][0] : +n + 1;
        return (
          <tr key={n}>
            <RowHead scope="row" $on={n === '369'} $top={+n - prev > 1} $bottom={next - +n > 1}>{n}</RowHead>
            <Cell>{account}</Cell><Cell>{date}</Cell><Cell>{order}</Cell>
            <Cell $copied={n === '369'}>{`US-Q3-25-${po}-P`}</Cell>
            <Cell>{disti}</Cell><Cell>{qty}</Cell><Cell>{tracking}</Cell><Cell />
            <Cell $marked={n === '416'} /><Cell /><Cell />
          </tr>
        );
      })}
    </tbody>
  </Grid>
);

const ChromeLogo = ({ children }: { children?: React.ReactNode }) => (
  <svg width="28" height="28" viewBox="0 0 28 28" aria-hidden="true">
    <circle cx="13" cy="13" r="12" fill="#fbc116" />
    <path d="M13 13 2.600 7A12 12 0 0 0 13 25l5-9z" fill="#2da94f" />
    <path d="M13 7h10.400A12 12 0 0 0 2.600 7l5.200 9z" fill="#e33b2e" />
    <circle cx="13" cy="13" r="6" fill="#fff" /><circle cx="13" cy="13" r="4.600" fill="#4285f4" />
    {children}
  </svg>
);

const App = () => (
  <Desktop>
    <GlobalStyle />
    <TitleBar>
      <BarSide><TeamsLogo /><Spacer /><BarButton $w={34} aria-label="Back"><Left /></BarButton><BarButton $w={33} $muted aria-label="Forward"><Right /></BarButton></BarSide>
      <SearchBox $gap={18} $pad={26}><SearchIcon /><input type="text" aria-label="Search" placeholder="Search (Ctrl+E)" /></SearchBox>
      <BarSide $end>
        <BarButton aria-label="More"><DotsIcon w={13} /></BarButton>
        <Avatar aria-label="SG, available">SG<Presence><Icon w={7} box="0 0 8 8" sw={1.500}><path d="M1.500 4 3.500 6 6.500 2.500" /></Icon></Presence></Avatar>
        <BarButton $w={44} aria-label="Minimise"><Icon w={12}><path d="M1 8h14" /></Icon></BarButton>
        <BarButton $w={44} aria-label="Restore"><Icon w={12} sw={1.300}><rect x="1.500" y="4" width="10.500" height="10.500" rx="1" /><path d="M4.500 1.500h7.500a2.500 2.500 0 0 1 2.500 2.500v7.500" /></Icon></BarButton>
        <BarButton $w={44} aria-label="Close window"><Icon w={12} sw={1.300}><path d="M1 1l14 14M15 1 1 15" /></Icon></BarButton>
      </BarSide>
    </TitleBar>
    <Body>
      <Rail aria-label="Teams">
        <RailItem><BellIcon />Activity</RailItem>
        <RailItem $active><ChatIcon />Chat</RailItem>
        <RailItem><CalendarIcon />Calendar</RailItem>
        <RailItem><PhoneIcon />Calls</RailItem>
        <RailItem><CloudIcon />OneDrive</RailItem>
        <RailItem><CopilotIcon />Copilot</RailItem>
        <RailItem aria-label="More apps"><DotsIcon /></RailItem>
        <RailItem><AppsIcon />Apps</RailItem>
      </Rail>
      <Main>
        <FileHeader><ExcelLogo /><h1>Orders &amp; Trackings</h1><IconButton aria-label="Exit full view"><Icon w={17} sw={1.100}><path d="M15 1 9.500 6.500M9.500 2.500v4h4M1 15l5.500-5.500M2.500 9.500h4v4" /></Icon></IconButton></FileHeader>
        <DocBar>
          <DocName><ExcelLogo w={20} /><span>Orders &amp; Trackings</span>
            <Icon w={17} sw={1.100}><path d="M6.500 12.500H4a3 3 0 0 1-.3-6A4.300 4.300 0 0 1 12 5.500c1.500.2 2.500 1 2.800 2.300" /><circle cx="11.500" cy="11.500" r="4" fill="#2e9e4a" stroke="none" /><path d="M9.700 11.700 11 13l2.300-2.500" stroke="#fff" /></Icon>
            <DocMenu aria-label="File options"><Chevron w={9} sw={1} /></DocMenu></DocName>
          <SearchBox $gap={12} $pad={18}><SearchIcon flip /><input type="text" aria-label="Search tools" placeholder="Search for tools, help, and more (Alt + Q)" /></SearchBox>
        </DocBar>
        <MenuBar>
          <MenuTabs aria-label="Ribbon tabs">{['File', 'Home', 'Insert', 'Share', 'Page Layout', 'Formulas', 'Data', 'Review', 'View', 'Automate', 'Help', 'Draw'].map((t) => <MenuTab key={t} $active={t === 'Home'}>{t}</MenuTab>)}</MenuTabs>
          <Actions>
            <Peers aria-label="2 more people">+2</Peers>
            <ActionButton $w={34} aria-label="Comments"><Icon sw={1.200}><path d="M3 2h10a1.500 1.500 0 0 1 1.500 1.500v6.500a1.500 1.500 0 0 1-1.500 1.500H8l-3.500 3v-3H3A1.500 1.500 0 0 1 1.500 10V3.500A1.500 1.500 0 0 1 3 2z" /></Icon></ActionButton>
            <ActionButton $w={34} aria-label="Catch up"><Icon sw={1.300}><path d="M2 7.500C3 5.500 5 5.500 6 7.500s2 3.500 3 1 1.500-3 2.500-1 1.500 2 2.500 1" /><circle cx="2" cy="8" r="1" fill="currentColor" /><circle cx="14" cy="8" r="1" fill="currentColor" /></Icon></ActionButton>
            <ActionButton $w={50} aria-label="Editing mode"><Icon sw={1.100}><path d="M1.500 14.500 2.500 10.500 11 2a1.800 1.800 0 0 1 3 3L5.500 13.500zM9.500 3.500l3 3" /></Icon><Chevron w={11} sw={1} /></ActionButton>
            <ActionButton $w={83} $primary><Icon w={15} sw={1.200}><circle cx="5" cy="4" r="2.500" /><circle cx="12" cy="4.500" r="1.800" /><path d="M1 9.500h8V11c0 2-1.500 3.500-4 3.500S1 13 1 11zM11 8.500h4v2c0 1.800-1.500 3-3.500 2.800" /></Icon>Share<Chevron w={11} sw={1} /></ActionButton>
            <ActionButton $w={51}>Close</ActionButton>
          </Actions>
        </MenuBar>
        <RibbonBar />
        <FormulaBar>
          <Field $w={124}><input type="text" aria-label="Name box" defaultValue="D369" /><Chevron w={11} sw={1} /></Field>
          <Field $w={87}>
            <IconButton $w={18} $muted aria-label="Cancel"><Icon w={14} sw={1.100}><path d="M2 2l12 12M14 2 2 14" /></Icon></IconButton>
            <IconButton $w={36} $muted aria-label="Enter"><Icon w={16} sw={1.400}><path d="M1 9l4 4L15 3" /></Icon></IconButton>
            <Fx $w={14} aria-label="Insert function">fx</Fx><IconButton $w={12} $muted aria-label="Function options"><Chevron /></IconButton>
          </Field>
          <FormulaField><input type="text" aria-label="Formula" defaultValue="US-Q3-25-AZ00310-P" /><IconButton $w={26} aria-label="Expand formula bar"><Chevron w={11} sw={1} /></IconButton></FormulaField>
        </FormulaBar>
        <SheetArea>
          <SheetPane><FreezeMark /><SheetGrid /></SheetPane>
          <VScroll aria-hidden="true">
            <Icon w={8} box="0 0 8 8"><path d="M4 1.500 7 6H1z" fill="currentColor" /></Icon><VThumb /><Spacer /><Icon w={8} box="0 0 8 8"><path d="M4 6.500 7 2H1z" fill="currentColor" /></Icon>
          </VScroll>
        </SheetArea>
        <HScroll aria-hidden="true"><Icon w={8} box="0 0 8 8"><path d="M1.500 4 6 1v6z" fill="currentColor" /></Icon><HThumb /></HScroll>
        <SheetTabs>
          <SheetNav>
            <IconButton $muted aria-label="Previous sheet"><Left w={12} /></IconButton>
            <IconButton $w={32} $muted aria-label="Next sheet"><Right w={12} /></IconButton>
            <IconButton aria-label="All sheets"><Icon w={13} sw={1.200}><path d="M1 3h14M1 8h14M1 13h14" /></Icon></IconButton>
          </SheetNav>
          <TabList>
            <SheetTab>All Orders Q1</SheetTab>
            <SheetTab>All Orders Q2 025<EyeIcon /></SheetTab>
            <SheetTab $active>All Orders Q3 025<EyeIcon /></SheetTab>
            <SheetTab>Sheet2</SheetTab><SheetTab>OLD Orders</SheetTab><SheetTab>RAW</SheetTab><SheetTab>Sheet1</SheetTab>
            <SheetTab><Icon w={13} h={14} sw={1.300}><rect x="2.500" y="6" width="11" height="9" rx="1.500" /><path d="M5 6V4a3 3 0 0 1 6 0v2M8 10v1" /></Icon>Instructions</SheetTab>
            <SheetTab aria-label="New sheet"><Icon w={12} sw={1.300}><path d="M8 1v14M1 8h14" /></Icon></SheetTab>
          </TabList>
        </SheetTabs>
        <StatusBar>
          <span>Select destination and press ENTER or choose Paste</span>
          <StatusRight>
            <Chevron w={6} sw={1.600} /><Feedback href="#feedback">Give Feedback to Microsoft</Feedback>
            <Icon w={10}><path d="M1 8h14" /></Icon><span>85%</span><Icon w={10} sw={1.500}><path d="M1 8h14M8 1v14" /></Icon>
          </StatusRight>
        </StatusBar>
      </Main>
    </Body>
    <Tracker>
      <OpenApp>Open App ↗</OpenApp>
      <TrackerRow $bg="#7bc6cc">Working Status: Active</TrackerRow>
      <TrackerRow $bg="#5ad68c">Active: 01:26:13</TrackerRow>
      <TrackerRow $bg="#ec7166">In Active: 00:09:49</TrackerRow>
    </Tracker>
    <Taskbar>
      <TaskButton $w={48} aria-label="Start"><svg width="16" height="16" viewBox="0 0 16 16" fill="#fff" aria-hidden="true"><path d="M0 2.300 6.800 1.300V7.600H0zM7.600 1.200 16 0V7.600H7.600zM0 8.400H6.800V14.700L0 13.700zM7.600 8.400H16V16L7.600 14.800z" /></svg></TaskButton>
      <TaskSearch><SearchIcon w={16} flip /><input type="text" aria-label="Taskbar search" placeholder="Type here to search" /></TaskSearch>
      <TaskButton $w={51} aria-label="Task view"><Icon w={17} sw={1.300}><rect x="1.500" y="4.500" width="8.500" height="7" /><path d="M1.500 1v1.500H10V1M1.500 15v-1.500H10V15M13.500 1v14" /><path d="M13.500 6v2.500" strokeWidth="3" /></Icon></TaskButton>
      <AppButton $bg="#a85c26" $line="#f97a00" $full aria-label="Outlook">
        <svg width="28" height="28" viewBox="0 0 28 28" aria-hidden="true"><rect x="8" y="2" width="15" height="18" fill="#1490df" /><path d="M15 2h8v6h-8z" fill="#50d9ff" /><path d="M15 8h8v6h-8z" fill="#28a8ea" /><rect x="1" y="7" width="12" height="12" rx="1" fill="#0f5ba8" /><circle cx="7" cy="13" r="3" fill="none" stroke="#fff" strokeWidth="1.800" /><rect x="11" y="16" width="16" height="11" fill="#f9d9a8" /><path d="M11 16l8 6 8-6" fill="#fff3e0" stroke="#d08a3a" /></svg>
      </AppButton>
      <AppButton $line="#76b9ed" aria-label="Chrome"><ChromeLogo><circle cx="19.500" cy="20" r="6.500" fill="#0d5c4a" /><path d="M21.500 16.500c-2-.3-2.300.8-2.300 2v5M17.700 19.500H21" stroke="#fff" fill="none" /></ChromeLogo></AppButton>
      <AppButton $line="#76b9ed" aria-label="Zoom">
        <svg width="28" height="28" viewBox="0 0 28 28" aria-hidden="true"><circle cx="13.500" cy="13" r="12" fill="#1668f5" /><text x="13" y="16.500" textAnchor="middle" fontFamily="Open Sans" fontWeight="700" fontSize="11" fill="#fff">zm</text><circle cx="22.500" cy="23" r="3.500" fill="#f3334a" /></svg>
      </AppButton>
      <AppButton $line="#76b9ed" aria-label="Excel"><ExcelLogo w={25} /></AppButton>
      <AppButton aria-label="File Explorer">
        <svg width="24" height="22" viewBox="0 0 24 22" aria-hidden="true"><path d="M1 1h8l2 2.500h12V21H1z" fill="#f0b72a" /><path d="M1 6h22v15H1z" fill="#fbd75b" /><path d="M5 21v-8h14v8h-4v-4H9v4z" fill="#3f8fd8" /></svg>
      </AppButton>
      <AppButton $bg="#484848" $line="#76b9ed" $full aria-label="Teams">
        <svg width="28" height="28" viewBox="0 0 28 28" aria-hidden="true"><circle cx="15" cy="6" r="4" fill="#7b83eb" /><circle cx="22" cy="8" r="2.800" fill="#5059c9" /><path d="M10 10h16v7a6 6 0 0 1-6 6h-8z" fill="#7b83eb" /><rect x="2" y="7" width="13" height="13" rx="1" fill="#4b53bc" /><path d="M5 10.500h7M8.500 10.500v7" stroke="#fff" strokeWidth="1.700" /><circle cx="20" cy="20" r="7" fill="#13a10e" /><path d="M16.800 20.300l2.300 2.300 4-4.500" stroke="#fff" strokeWidth="1.600" fill="none" /></svg>
      </AppButton>
      <AppButton $line="#76b9ed" aria-label="Time tracker">
        <svg width="24" height="24" viewBox="0 0 24 24" aria-hidden="true"><path d="M6 3h12l5 9-5 9H6l-5-9z" fill="#4f8f93" /><path d="M6 3h7l-4 5v8l4 5H6l-5-9z" fill="#86c5c6" /><path d="M13 6l4 6-4 6-4-3V9z" fill="#173c40" /></svg>
      </AppButton>
      <AppButton $line="#76b9ed" aria-label="Surfshark">
        <svg width="20" height="24" viewBox="0 0 22 26" aria-hidden="true"><path d="M8 1h13v14c0 6-4 9-9 10C6 24 1 20 1 16V8a7 7 0 0 1 7-7z" fill="#1b9aa5" /><path d="M15 6c-4 0-4 2.500-4 6s-.5 6-5 6" stroke="#fff" strokeWidth="2.600" fill="none" /></svg>
      </AppButton>
      <AppButton $bg="#383838" $line="#76b9ed" $full aria-label="Chrome, second profile"><ChromeLogo><circle cx="19.500" cy="20" r="6.500" fill="#f7cfd0" /><circle cx="19.500" cy="18" r="2.300" fill="#d65a5a" /><path d="M15.500 24c1-3.500 7-3.500 8 0" fill="#fff" stroke="#d65a5a" /></ChromeLogo></AppButton>
      <Tray>
        <Weather>
          <svg width="28" height="26" viewBox="0 0 28 26" aria-hidden="true"><path d="M7 22h14a5 5 0 0 0 1-9.800A7.500 7.500 0 0 0 8 11a5.600 5.600 0 0 0-1 11z" fill="#c6d6f2" /><path d="M3 20c2 2.500 18 2.500 22 0-1 1.500-2.500 2-4 2H7c-2 0-3-.5-4-2z" fill="#8fa9dc" /><circle cx="19" cy="7" r="6.500" fill="#d13438" /><text x="19" y="10.500" textAnchor="middle" fontFamily="Open Sans" fontSize="9" fill="#fff">1</text></svg>
          {'29°C  Cloudy'}
        </Weather>
        <TrayButton $w={22} aria-label="Hidden icons"><Icon w={12} sw={1.600}><path d="M1 11l7-7 7 7" /></Icon></TrayButton>
        <TrayButton $w={26} aria-label="Network"><Icon w={17} sw={1.200}><path d="M5 3.500h10.500v7.500H4V7M1 1.500h4V6H1zM9.500 11v3M6.500 14.500h6M3 6v8" /></Icon></TrayButton>
        <TrayButton $w={22} aria-label="Volume"><Icon w={17} sw={1.200}><path d="M1 6h2.500L7 3v10L3.500 10H1zM9 6c1 1 1 3 0 4M11 4c2 2 2 6 0 8M13 2.500c3 3 3 8 0 11" /></Icon></TrayButton>
        <Clock>{'7:35 AM\n7/14/2025'}</Clock>
        <Notices aria-label="32 notifications">
          <svg width="28" height="30" viewBox="0 0 28 30" aria-hidden="true"><path d="M3 4h15v12H9l-3 4v-4H3z" fill="#fff" /><path d="M5.500 7.500h10M5.500 10h10M5.500 12.500h10" stroke="#1c1c1c" /><circle cx="18" cy="19" r="8.500" fill="#3a3a3a" stroke="#8a8a8a" /><text x="18" y="23" textAnchor="middle" fontFamily="Open Sans" fontWeight="600" fontSize="11" fill="#fff">32</text></svg>
        </Notices>
      </Tray>
    </Taskbar>
  </Desktop>
);

export default App;
